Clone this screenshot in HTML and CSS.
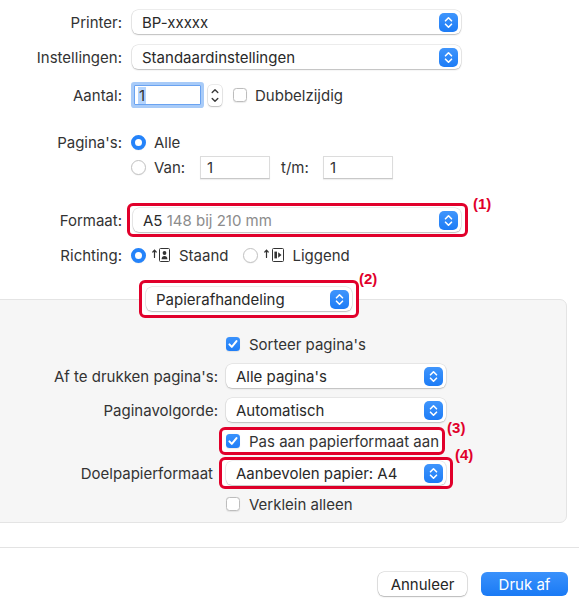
FILE: index.html
```html
<!doctype html>
<html lang="nl">
  <head>
    <meta charset="UTF-8" />
    <meta name="viewport" content="width=device-width, initial-scale=1.0" />
    <title>Afdrukken</title>
    <link rel="stylesheet" href="styles.css">
  </head>
  <body>
    <div class="dialog">
      <!-- Printer & preset -->
      <div class="row row-printer">
        <span class="label">Printer:</span>
        <div class="popup popup-top">
          <span>BP-xxxxx</span>
          <span class="arrows"><svg width="19" height="19" viewBox="0 0 19 19"><path d="M6.5 7.8l3-3 3 3M6.5 11.2l3 3 3-3" fill="none" stroke="#fff" stroke-width="1.6" stroke-linecap="round" stroke-linejoin="round"/></svg></span>
        </div>
      </div>

      <div class="row row-preset">
        <span class="label">Instellingen:</span>
        <div class="popup popup-top">
          <span>Standaardinstellingen</span>
          <span class="arrows"><svg width="19" height="19" viewBox="0 0 19 19"><path d="M6.5 7.8l3-3 3 3M6.5 11.2l3 3 3-3" fill="none" stroke="#fff" stroke-width="1.6" stroke-linecap="round" stroke-linejoin="round"/></svg></span>
        </div>
      </div>

      <!-- Copies -->
      <div class="row row-copies">
        <span class="label">Aantal:</span>
        <div class="num-field"><span class="selected">1</span></div>
        <div class="stepper"><svg width="14" height="21" viewBox="0 0 14 21"><path d="M4.2 7.6l2.8-2.8 2.8 2.8M4.2 13.4l2.8 2.8 2.8-2.8" fill="none" stroke="#3a3a3a" stroke-width="1.4" stroke-linecap="round" stroke-linejoin="round"/></svg></div>
        <span class="checkbox duplex-box"></span>
        <span class="check-text">Dubbelzijdig</span>
      </div>

      <!-- Pages -->
      <div class="row row-pages">
        <span class="label">Pagina's:</span>
        <span class="radio on"></span>
        <span class="radio-text">Alle</span>
      </div>

      <div class="row row-range">
        <span class="label"></span>
        <span class="radio"></span>
        <span class="radio-text range-from">Van:</span>
        <div class="text-field">1</div>
        <span class="range-to">t/m:</span>
        <div class="text-field">1</div>
      </div>

      <!-- Paper size -->
      <div class="row row-size">
        <span class="label">Formaat:</span>
        <div class="mark mark-size">
          <div class="popup popup-size">
            <span>A5 <span class="muted">148 bij 210 mm</span></span>
            <span class="arrows"><svg width="19" height="19" viewBox="0 0 19 19"><path d="M6.5 7.8l3-3 3 3M6.5 11.2l3 3 3-3" fill="none" stroke="#fff" stroke-width="1.6" stroke-linecap="round" stroke-linejoin="round"/></svg></span>
          </div>
          <span class="callout callout-1">(1)</span>
        </div>
      </div>

      <!-- Orientation -->
      <div class="row row-orient">
        <span class="label">Richting:</span>
        <span class="radio on"></span>
        <svg class="orient-icon" width="20" height="16" viewBox="0 0 20 16">
          <path d="M3.5 10.5V3.2M1.8 5l1.7-1.9L5.2 5" fill="none" stroke="#333" stroke-width="1.2" stroke-linecap="round" stroke-linejoin="round"/>
          <rect x="8.5" y="1.5" width="10" height="13" rx="1" fill="none" stroke="#333" stroke-width="1"/>
          <circle cx="13.5" cy="6" r="1.9" fill="#333"/>
          <path d="M10.6 12.3c0-2.1 1.2-3.2 2.9-3.2s2.9 1.1 2.9 3.2z" fill="#333"/>
        </svg>
        <span class="orient-text">Staand</span>
        <span class="radio landscape-radio"></span>
        <svg class="orient-icon landscape-icon" width="22" height="16" viewBox="0 0 22 16">
          <path d="M3.5 10.5V3.2M1.8 5l1.7-1.9L5.2 5" fill="none" stroke="#333" stroke-width="1.2" stroke-linecap="round" stroke-linejoin="round"/>
          <rect x="9.5" y="1.5" width="11" height="13" rx="1" fill="none" stroke="#333" stroke-width="1"/>
          <rect x="11.4" y="4.6" width="2.6" height="6.8" fill="#333"/>
          <path d="M15.2 5.2l3.3 2.8-3.3 2.8z" fill="#333"/>
        </svg>
        <span class="orient-text">Liggend</span>
      </div>

      <!-- Section chooser -->
      <div class="mark mark-handling">
        <div class="popup popup-handling">
          <span>Papierafhandeling</span>
          <span class="arrows"><svg width="19" height="19" viewBox="0 0 19 19"><path d="M6.5 7.8l3-3 3 3M6.5 11.2l3 3 3-3" fill="none" stroke="#fff" stroke-width="1.6" stroke-linecap="round" stroke-linejoin="round"/></svg></span>
        </div>
        <span class="callout callout-2">(2)</span>
      </div>

      <!-- Paper handling panel -->
      <div class="panel">
        <div class="row row-collate">
          <span class="label"></span>
          <span class="checkbox on"><svg width="14" height="14" viewBox="0 0 14 14"><path d="M3.4 7.4l2.4 2.5 4.7-5.8" fill="none" stroke="#fff" stroke-width="2" stroke-linecap="round" stroke-linejoin="round"/></svg></span>
          <span class="check-text">Sorteer pagina's</span>
        </div>

        <div class="row row-panel-popup">
          <span class="label">Af te drukken pagina's:</span>
          <div class="popup popup-panel">
            <span>Alle pagina's</span>
            <span class="arrows"><svg width="19" height="19" viewBox="0 0 19 19"><path d="M6.5 7.8l3-3 3 3M6.5 11.2l3 3 3-3" fill="none" stroke="#fff" stroke-width="1.6" stroke-linecap="round" stroke-linejoin="round"/></svg></span>
          </div>
        </div>

        <div class="row row-panel-popup">
          <span class="label">Paginavolgorde:</span>
          <div class="popup popup-panel">
            <span>Automatisch</span>
            <span class="arrows"><svg width="19" height="19" viewBox="0 0 19 19"><path d="M6.5 7.8l3-3 3 3M6.5 11.2l3 3 3-3" fill="none" stroke="#fff" stroke-width="1.6" stroke-linecap="round" stroke-linejoin="round"/></svg></span>
          </div>
        </div>

        <div class="row row-scale">
          <span class="label"></span>
          <div class="mark mark-scale">
            <span class="checkbox on"><svg width="14" height="14" viewBox="0 0 14 14"><path d="M3.4 7.4l2.4 2.5 4.7-5.8" fill="none" stroke="#fff" stroke-width="2" stroke-linecap="round" stroke-linejoin="round"/></svg></span>
            <span class="check-text">Pas aan papierformaat aan</span>
            <span class="callout callout-3">(3)</span>
          </div>
        </div>

        <div class="row row-target">
          <span class="label target-label">Doelpapierformaat</span>
          <div class="mark mark-target">
            <div class="popup popup-panel">
              <span>Aanbevolen papier: A4</span>
              <span class="arrows"><svg width="19" height="19" viewBox="0 0 19 19"><path d="M6.5 7.8l3-3 3 3M6.5 11.2l3 3 3-3" fill="none" stroke="#fff" stroke-width="1.6" stroke-linecap="round" stroke-linejoin="round"/></svg></span>
            </div>
            <span class="callout callout-4">(4)</span>
          </div>
        </div>

        <div class="row row-shrink">
          <span class="label"></span>
          <span class="checkbox"></span>
          <span class="check-text">Verklein alleen</span>
        </div>
      </div>

      <!-- Buttons -->
      <div class="footer">
        <button class="btn btn-cancel">Annuleer</button>
        <button class="btn btn-print">Druk af</button>
      </div>
    </div>
  </body>
</html>
```

FILE: styles.css
```css
* {
  box-sizing: border-box;
}

body {
  margin: 0;
  font-family: "Inter", "Noto Sans", sans-serif;
  font-size: 15px;
  color: #333;
  background: #fff;
}

.dialog {
  width: 579px;
  height: 611px;
  padding-top: 10px;
  overflow: hidden;
}

/* Form rows */
.row {
  display: flex;
  align-items: center;
}

.label {
  width: 122px;
  flex-shrink: 0;
  text-align: right;
  white-space: nowrap;
}

.row-printer { height: 24px; }
.row-preset { height: 24px; margin-top: 11px; }
.row-copies { height: 26px; margin-top: 13px; }
.row-pages { height: 20px; margin-top: 24px; }
.row-range { height: 23px; margin-top: 4px; }
.row-size { height: 34px; margin-top: 24px; }
.row-orient { height: 20px; margin-top: 8px; }

/* Popup buttons */
.popup {
  display: flex;
  align-items: center;
  height: 24px;
  padding-left: 10px;
  padding-right: 3px;
  background: #fff;
  border-radius: 6px;
  color: #292929;
  white-space: nowrap;
  box-shadow: 0 0 0 0.5px rgba(0, 0, 0, 0.14),
    0 1px 1.5px rgba(0, 0, 0, 0.2);
}

.popup .arrows {
  margin-left: auto;
  width: 19px;
  height: 19px;
  border-radius: 5px;
  background: linear-gradient(#3f95fc, #1d7cf6);
}

.popup .arrows svg {
  display: block;
}

.popup-top {
  width: 329px;
  margin-left: 10px;
}

.popup-size {
  width: 328px;
}

.popup-handling {
  width: 206px;
}

.popup-panel {
  width: 220px;
  margin-left: 8px;
}

.muted {
  color: #8c8c8c;
}

/* Copies */
.num-field {
  width: 67px;
  height: 20px;
  margin-left: 12px;
  padding-left: 3px;
  display: flex;
  align-items: center;
  background: #fff;
  border: 1px solid #6aa3f1;
  box-shadow: 0 0 0 3px #a8cbf8;
  border-radius: 1px;
}

.selected {
  background: #b4d4fd;
  padding: 0 1px;
  line-height: 17px;
}

.stepper {
  width: 14px;
  height: 21px;
  margin-left: 7px;
  background: #fff;
  border-radius: 4px;
  box-shadow: 0 0 0 0.5px rgba(0, 0, 0, 0.15),
    0 1px 1.5px rgba(0, 0, 0, 0.2);
}

.stepper svg {
  display: block;
}

/* Checkboxes */
.checkbox {
  width: 14px;
  height: 14px;
  flex-shrink: 0;
  border-radius: 3.5px;
  background: #fff;
  border: 1px solid #bdbdbd;
  box-shadow: 0 0.5px 1px rgba(0, 0, 0, 0.08);
}

.checkbox.on {
  border: none;
  background: linear-gradient(#3a92fc, #1f7ef7);
}

.checkbox svg {
  display: block;
}

.check-text {
  margin-left: 9px;
  white-space: nowrap;
}

.duplex-box {
  margin-left: 11px;
}

.duplex-box + .check-text {
  margin-left: 8px;
}

/* Radios */
.radio {
  width: 15px;
  height: 15px;
  flex-shrink: 0;
  margin-left: 9px;
  border-radius: 50%;
  background: #fff;
  border: 1px solid #c2c2c2;
  box-shadow: 0 0.5px 1px rgba(0, 0, 0, 0.08);
}

.radio.on {
  border: 4.5px solid #2483fa;
  background: #fff;
}

.radio-text {
  margin-left: 8px;
}

.range-from {
  width: 46px;
}

.text-field {
  width: 70px;
  height: 23px;
  padding-left: 6px;
  line-height: 22px;
  background: #fff;
  border: 1px solid #dcdcdc;
  border-bottom-color: #c8c8c8;
  box-shadow: 0 1px 1px rgba(0, 0, 0, 0.06);
}

.range-to {
  width: 42px;
  margin-left: 11px;
}

/* Orientation */
.orient-icon {
  margin-left: 5px;
  flex-shrink: 0;
}

.orient-text {
  margin-left: 8px;
}

.landscape-radio {
  margin-left: 14px;
}

.landscape-icon {
  margin-left: 5px;
}

/* Red annotation marks */
.mark {
  position: relative;
  display: flex;
  align-items: center;
  width: fit-content;
  background: #fff;
  border: 3px solid #e1002b;
  border-radius: 6px;
}

.callout {
  position: absolute;
  left: 100%;
  font-family: "Liberation Sans", Arial, sans-serif;
  font-size: 15px;
  font-weight: bold;
  line-height: 15px;
  color: #e1002b;
  white-space: nowrap;
}

.mark-size {
  margin-left: 5px;
  padding: 2px 4px 2px 3px;
}

.callout-1 {
  top: -10px;
  margin-left: 8px;
}

.mark-handling {
  margin-top: 15px;
  margin-left: 139px;
  padding: 4px;
  z-index: 1;
}

.callout-2 {
  top: -12px;
  margin-left: 3px;
}

/* Gray settings panel */
.panel {
  margin-top: -19px;
  margin-left: -8px;
  width: 575px;
  height: 224px;
  padding: 34px 0 0 7px;
  background: #f6f6f6;
  border: 1px solid #e4e4e4;
  border-radius: 7px;
}

.panel .label {
  width: 218px;
}

.panel .popup {
  box-shadow: 0 0 0 0.5px rgba(0, 0, 0, 0.12),
    0 1px 1.5px rgba(0, 0, 0, 0.18);
}

.row-collate { height: 20px; }
.row-collate .checkbox { margin-left: 8px; }

.row-panel-popup { height: 24px; margin-top: 10px; }

.row-scale { height: 28px; margin-top: 5px; }

.mark-scale {
  margin-left: 1px;
  height: 28px;
  padding: 0 3px 0 4px;
}

.callout-3 {
  top: -10px;
  margin-left: 5px;
}

.row-target { height: 32px; margin-top: 2px; }

.target-label {
  padding-right: 5px;
}

.mark-target {
  margin-left: 1px;
  padding: 1px 4px 1px 4px;
}

.mark-target .popup-panel {
  margin-left: 0;
}

.callout-4 {
  top: -13px;
  margin-left: 5px;
}

.row-shrink { height: 20px; margin-top: 5px; }
.row-shrink .checkbox { margin-left: 8px; }

/* Footer */
.footer {
  margin-top: 24px;
  padding: 24px 11px 0 0;
  border-top: 1px solid #e3e3e3;
  display: flex;
  justify-content: flex-end;
  gap: 14px;
}

.btn {
  height: 24px;
  padding: 0;
  border: none;
  border-radius: 6px;
  font-family: "Inter", "Noto Sans", sans-serif;
  font-size: 15px;
}

.btn-cancel {
  width: 89px;
  background: #fff;
  color: #262626;
  box-shadow: 0 0 0 0.5px rgba(0, 0, 0, 0.2),
    0 1px 1.5px rgba(0, 0, 0, 0.2);
}

.btn-print {
  width: 87px;
  background: linear-gradient(#3a91fb, #1a7af5);
  color: #fff;
}
```
